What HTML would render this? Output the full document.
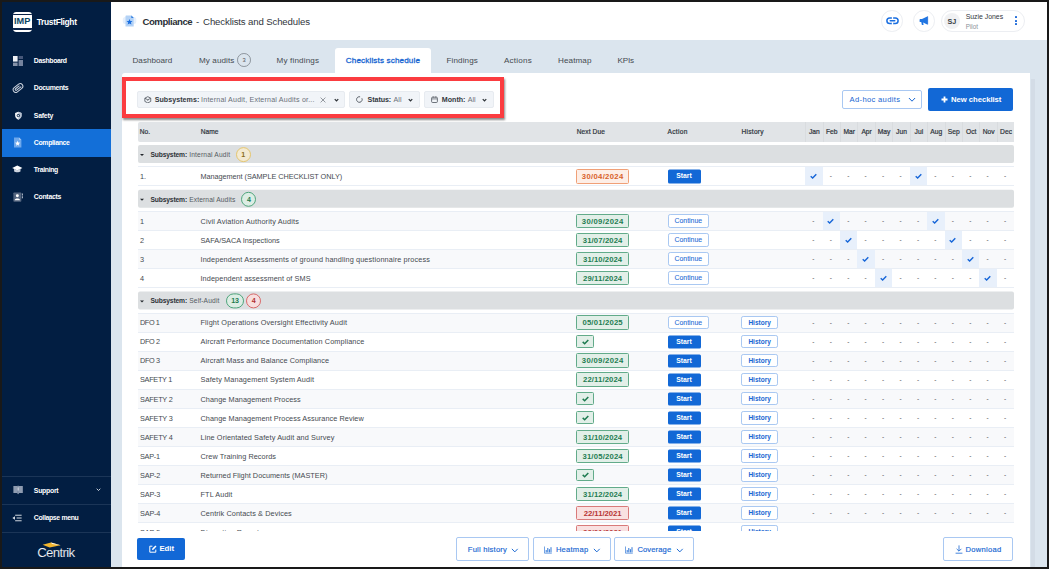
<!DOCTYPE html>
<html lang="en">
<head>
<meta charset="utf-8">
<title>Compliance - Checklists and Schedules</title>
<style>
*{box-sizing:border-box;margin:0;padding:0}
html,body{width:1049px;height:569px;overflow:hidden}
body{position:relative;background:#dbe5ee;font-family:"Liberation Sans",Arial,sans-serif;color:#3a3f45;font-size:7.4px;line-height:1}
.abs{position:absolute}
#frame{position:absolute;left:0;top:0;width:1049px;height:569px;border:2px solid #191919;border-right-width:2px;z-index:50;pointer-events:none}
/* sidebar */
#side{position:absolute;left:2px;top:2px;width:108.5px;height:565px;background:#021e42;color:#fff}
#side .logo{position:absolute;left:10.5px;top:9.7px;width:19.5px;height:20.3px;background:#fff;border-radius:3.4px;overflow:hidden}
#side .logo span{position:absolute;left:0;right:0;top:5.4px;text-align:center;font-weight:bold;font-size:9.2px;color:#0c4562;letter-spacing:0.1px}
#side .logo i{position:absolute;left:0;right:0;top:16.4px;height:1.6px;background:#0b2348}
#side .logo u{position:absolute;left:0;right:0;top:1.9px;height:1.1px;background:#0b2348}
#side .brand{position:absolute;left:34.7px;top:16.2px;font-weight:bold;font-size:8.4px;white-space:nowrap}
.nav{position:absolute;left:0;width:108.5px;height:27.3px;font-size:6.9px;font-weight:bold;letter-spacing:-0.15px}
.nav.act{background:#136fd8;height:27.6px}
.nav span{position:absolute;left:31.8px;top:10.7px;white-space:nowrap}
.nav i{font-style:normal}
.nav svg{position:absolute;left:10.5px;top:8px}
.sdiv{position:absolute;left:0;width:108.5px;height:1px;background:#1b3557}
/* topbar */
#top{position:absolute;left:110.5px;top:2px;width:936.5px;height:38px;background:#fff}
#title{position:absolute;left:32px;top:14.6px;font-size:9.6px;color:#30353b;white-space:nowrap;letter-spacing:0.05px}
#title b{font-weight:bold;color:#2b3036}
.circ{position:absolute;width:21.6px;height:21.6px;border-radius:50%;border:1px solid #eceef2;background:#fff}
#user{position:absolute;left:830.6px;top:8.2px;width:84px;height:21.6px;border-radius:11px;border:1px solid #eceef2;background:#fff}
#user .av{position:absolute;left:1.6px;top:1.6px;width:16.6px;height:16.6px;border-radius:50%;background:#f0f1f3;font-size:7.2px;font-weight:bold;color:#3a3f45;text-align:center;line-height:17px;letter-spacing:0.2px}
#user .n1{position:absolute;left:23.6px;top:3.2px;font-size:6.9px;color:#33383e;white-space:nowrap}
#user .n2{position:absolute;left:23.6px;top:12.7px;font-size:6.3px;color:#8a9098}
#user .kb{position:absolute;left:72.8px;top:4.8px;width:2.2px}
#user .kb i{display:block;width:2.1px;height:2.1px;background:#1565d8;margin-bottom:1.55px;border-radius:0.4px}
/* tabs */
.tab{position:absolute;top:56.8px;font-size:8.1px;color:#454a50;white-space:nowrap}
#tabact{position:absolute;left:335px;top:48px;width:96px;height:27px;background:#fff;border-radius:3px 3px 0 0}
#tabact>span{position:absolute;left:10.8px;top:8.8px;font-size:8.1px;color:#1766d2;white-space:nowrap;-webkit-text-stroke:0.3px #1766d2}
.tbadge{position:absolute;left:237.2px;top:53.4px;width:13.8px;height:13.8px;border-radius:50%;border:1px solid #8c949c;font-size:5.8px;text-align:center;line-height:12.2px;color:#555}
/* panel */
#panel{position:absolute;left:122px;top:73px;width:908px;height:494px;background:#fff;border-radius:3px 0 0 0}
#sbar{position:absolute;left:1031.2px;top:79px;width:3.8px;height:489px;background:#d3dce6}
#red{position:absolute;left:122.2px;top:77px;width:381.8px;height:40.8px;border:4.5px solid #fb3c40;box-shadow:0.5px 1.5px 2px rgba(0,0,0,.45);z-index:5}
.filt{position:absolute;top:91px;height:16.8px;background:#f1f4f8;border:1px solid #e7ebf0;border-radius:2px;font-size:7.1px;color:#6a7078;white-space:nowrap}
.filt b{color:#33383e}
.filt .t{position:absolute;top:4.9px}
/* header buttons */
#adhoc{position:absolute;left:842px;top:90px;width:79.5px;height:18.5px;border:1px solid #a9c8f2;border-radius:2px;background:#fff;color:#1766d2;font-size:7.6px}
#adhoc>span{position:absolute;left:6.6px;top:5.3px;white-space:nowrap}
#newc{position:absolute;left:928.2px;top:88px;width:84.4px;height:22.6px;border-radius:2px;background:#1268d6;color:#fff;font-size:7.7px;font-weight:bold}
#newc>span{position:absolute;left:22.9px;top:7.7px;white-space:nowrap}
/* table */
#clip{position:absolute;left:0;top:0;width:1049px;height:531.3px;overflow:hidden}
#thead{position:absolute;left:137.5px;top:121.8px;width:876.3px;height:19.8px;overflow:hidden;border-radius:2px 0 0 2px;background:#e1e4e7;font-size:6.6px;color:#3a3f45}
#thead span{position:absolute;top:7.5px;white-space:nowrap;color:#2d333a;-webkit-text-stroke:0.2px #2d333a}
#thead i{font-style:normal}
#thead .m{position:absolute;top:0;height:19.8px;border-left:1px solid #d9dcdf;text-align:center;line-height:20.2px;font-size:6.7px;color:#2d333a;-webkit-text-stroke:0.2px #2d333a}
.grp{position:absolute;left:137.5px;width:876.3px;height:18px;background:#dcdfe1;border-radius:2px;font-size:6.7px;color:#555b62}
.grp .car{position:absolute;left:2.5px;top:8.9px;width:0;height:0;border-left:2px solid transparent;border-right:2px solid transparent;border-top:2.4px solid #23272c}
.grp .gl{position:absolute;left:13px;top:6.7px;white-space:nowrap}
.grp .gl b{color:#2d3237}
.grp .gl i{font-style:normal}
.ln{position:absolute;left:137.5px;width:876.3px;height:1px;background:#e9eef5}
.cb{position:absolute;top:1.9px;height:15px;min-width:15px;border-radius:7.5px;font-size:7.1px;font-weight:bold;text-align:center;line-height:14.8px;border:1px solid}
.cb.y{border-color:#e5c66e;background:#f3ead2;color:#8a6a1c}
.cb.g{border-color:#4fa57c;background:#dcede4;color:#1d7a4f}
.cb.g.w{width:18.6px}
.cb.r{border-color:#d86a6a;background:#f7dede;color:#b03030}
.row{position:absolute;left:137.5px;width:876.3px;height:19px;overflow:hidden;border-top:1px solid #e9eef5;background:#fff;font-size:7.3px;color:#454a50}
.row.odd{background:#f8f9fb}
.row.first{height:19.7px;border-bottom:1px solid #e9eef5}
.row.first>*{margin-top:0.1px}
.row .no{position:absolute;left:2.5px;top:5.6px;white-space:nowrap}
.row .nm{position:absolute;left:63px;top:5.6px;white-space:nowrap}
.due{position:absolute;left:438.6px;top:1.6px;width:52.8px;height:14.6px;border:1px solid;border-radius:1.5px;font-size:7.7px;font-weight:bold;text-align:center;line-height:14px;white-space:nowrap;padding-left:0.3px}
.due i{font-style:normal}
.due.g{border-color:#62ab8a;background:#e2efe8;color:#1f7d52}
.due.o{border-color:#f0a077;background:#fdeee6;color:#d8622a}
.due.r{border-color:#d97a7a;background:#f9e1e1;color:#b73535}
.due.chk{width:17.6px;height:12.8px;top:2.4px}
.due.chk svg{position:absolute;left:4.6px;top:2.8px}
.btn{position:absolute;left:530px;top:2.4px;height:13.2px;border-radius:1.5px;font-size:6.8px;text-align:center;line-height:14.2px}
.btn.start{top:2px;transform:translateY(0.45px);width:33px;background:#1268d6;color:#fff;font-weight:bold}
.btn.cont{width:41.6px;border:1px solid #a9c8f2;background:#fff;color:#1f6cd6;top:2px;line-height:12.3px;height:13.5px;font-size:6.9px;border-radius:2.2px;-webkit-text-stroke:0.08px #1f6cd6}
.btn.hist{left:603.6px;width:37px;border:1px solid #a9c8f2;background:#fff;color:#1766d2;top:2px;line-height:12.1px;height:13.5px;font-weight:bold;font-size:6.5px;border-radius:2.2px}
.mc{position:absolute;top:-1px;height:19px;text-align:center;line-height:19px;font-size:6.5px;color:#555;padding-right:0.8px}
.mc.on{background:#e8f0fb}
.mc svg{position:absolute;left:4.9px;top:6.6px}
/* bottom */
#bbar{position:absolute;left:122px;top:531.3px;width:908px;height:38px;background:#fff}
.bb{position:absolute;top:537.2px;height:23.6px;border:1px solid #a9c8f2;border-radius:2px;background:#fff;color:#1766d2;font-size:7.6px}
.bb span{position:absolute;top:7.7px;white-space:nowrap}
.bb i{font-style:normal;-webkit-text-stroke:0.15px #1766d2}
#edit{position:absolute;left:137px;top:537.9px;width:47.6px;height:22.6px;border-radius:2px;background:#1268d6;color:#fff;font-size:7.8px;font-weight:bold}
#edit span{position:absolute;left:22.4px;top:7.2px}
</style>
</head>
<body>
<div id="side">
  <div class="logo"><u></u><span>IMP</span><i></i></div>
  <div class="brand"><span style="letter-spacing:-0.297px">TrustFlight</span></div>
  <div class="nav" style="top:45.5px"><svg style="left:10.8px;top:8.4px" width="10" height="10" viewBox="0 0 10 10"><rect x="0" y="0" width="4.6" height="5.6" fill="#eef1f6"/><rect x="5.6" y="0" width="4.4" height="3" fill="#47587a"/><rect x="0" y="6.6" width="4.6" height="3.4" fill="#8491a8"/><rect x="5.6" y="4" width="4.4" height="6" fill="#75839e"/></svg><span><i style="letter-spacing:-0.345px">Dashboard</i></span></div>
  <div class="nav" style="top:72.8px"><svg style="left:10px;top:7.6px" width="12" height="12" viewBox="0 0 12 12"><g transform="rotate(-38 6 6)" fill="none" stroke="#ccd3de" stroke-width="1"><rect x="0.6" y="3.4" width="10.8" height="5.2" rx="2.6"/><path d="M9.4 6.9 H3.6 a0.9 0.9 0 0 1 0 -1.8 H8.6"/></g></svg><span><i style="letter-spacing:-0.347px">Documents</i></span></div>
  <div class="nav" style="top:100px"><svg style="left:11.6px;top:8.6px" width="8.6" height="9.4" viewBox="0 0 11 11"><path d="M5.5 0.6 L9.6 2.2 V5.4 C9.6 8 7.6 9.8 5.5 10.6 C3.4 9.8 1.4 8 1.4 5.4 V2.2 Z" fill="#f2f4f8"/><path d="M5.5 0.6 L9.6 2.2 V5.4 C9.6 8 7.6 9.8 5.5 10.6 Z" fill="#b4bfd0"/><circle cx="5.5" cy="5.3" r="2" fill="#021e42"/><circle cx="5.5" cy="5.3" r="1.1" fill="#dfe4ec"/></svg><span><i style="letter-spacing:-0.233px">Safety</i></span></div>
  <div class="nav act" style="top:127.2px"><svg style="left:9.7px;top:8.3px" width="11" height="11" viewBox="0 0 11 11"><path d="M2 0.4 H7 L9.4 2.8 V10.6 H2 Z" fill="#6ea8ec"/><path d="M7 0.4 L9.4 2.8 H7 Z" fill="#a9cbf5"/><path d="M5.6 3.8 L6.3 5.6 L8.2 5.7 L6.7 6.9 L7.2 8.8 L5.6 7.7 L4 8.8 L4.5 6.9 L3 5.7 L4.9 5.6 Z" fill="#fff"/></svg><span><i style="letter-spacing:-0.326px">Compliance</i></span></div>
  <div class="nav" style="top:154.5px"><svg style="left:10.2px;top:7.3px" width="10.6" height="10.6" viewBox="0 0 11 11"><path d="M5.5 1.6 L10.8 4.2 L5.5 6.8 L0.2 4.2 Z" fill="#fff"/><path d="M2.2 5 V7.8 C3.4 8.9 7.6 8.9 8.8 7.8 V5 L5.5 6.6 Z" fill="#cfd6e1"/></svg><span><i style="letter-spacing:-0.326px">Training</i></span></div>
  <div class="nav" style="top:181.8px"><svg style="left:10.5px;top:8.2px" width="10.2" height="10.2" viewBox="0 0 11 11"><rect x="0.4" y="0.6" width="8.6" height="9.8" rx="0.8" fill="#54657f"/><circle cx="4.7" cy="4" r="1.6" fill="#fff"/><path d="M1.8 8.8 C1.8 6.4 7.6 6.4 7.6 8.8 Z" fill="#fff"/><rect x="9.6" y="1.6" width="1" height="2.2" fill="#c8d0dc"/><rect x="9.6" y="4.6" width="1" height="2.2" fill="#c8d0dc"/></svg><span><i style="letter-spacing:-0.273px">Contacts</i></span></div>
  <div class="sdiv" style="top:474px"></div>
  <div class="nav" style="top:475.3px"><svg style="left:10.8px;top:7.9px" width="10.2" height="10.2" viewBox="0 0 11 11"><path d="M0.4 1 H5 V8.6 H0.4 Z M6 1 H10.6 V8.6 H6 Z" fill="#8e9bb0"/><rect x="4.9" y="0.8" width="1.2" height="9" fill="#aab4c6"/><rect x="5.1" y="2.6" width="0.8" height="3.4" fill="#fff"/></svg><span><i style="letter-spacing:-0.258px">Support</i></span><svg style="left:93.6px;top:10.6px" width="5" height="3.4" viewBox="0 0 6 4"><path d="M0.8 0.8 L3 3 L5.2 0.8" fill="none" stroke="#dfe4ec" stroke-width="1.1"/></svg></div>
  <div class="sdiv" style="top:502px"></div>
  <div class="nav" style="top:502.6px"><svg style="left:9.9px;top:8.2px" width="10.2" height="10.2" viewBox="0 0 11 11"><path d="M3.4 2.4 H10.4 M5 5.4 H10.4 M3.4 8.4 H10.4" stroke="#e4e8ee" stroke-width="1"/><path d="M0.4 5.4 L3.2 3.4 V7.4 Z" fill="#e4e8ee"/></svg><span><i style="letter-spacing:-0.332px">Collapse menu</i></span></div>
  <div class="sdiv" style="top:529.5px"></div>
  <svg class="abs" style="left:34px;top:537px" width="44" height="22" viewBox="0 0 44 22"><path d="M6.6 5.8 L15 3.6 L24.6 6.2 L13.6 8.4 Z" fill="#f3b62e"/><path d="M15 3.6 L24.6 6.2 L16 4.9 Z" fill="#fff" opacity="0.9"/><text x="1.2" y="17.6" font-family="Liberation Sans, Arial, sans-serif" font-size="13.2" fill="#f4f6f9" stroke="#021e42" stroke-width="0.12" textLength="37.9" lengthAdjust="spacing">Centrik</text></svg>
</div>

<div id="top">
  <svg class="abs" style="left:11.3px;top:13px" width="15" height="12" viewBox="0 0 15 12"><rect x="0.8" y="2" width="13.5" height="7" rx="2.5" fill="#e6f0fc"/><path d="M4 0.5 H9.6 L11.7 2.6 V11.5 H3.5 V1 Z" fill="#b3d2f6"/><path d="M9.3 0.6 L11.7 3 H9.3 Z" fill="#2f7de0"/><path d="M7.5 4 L8.4 6 L10.5 6.1 L8.9 7.5 L9.5 9.6 L7.5 8.4 L5.6 9.6 L6.2 7.5 L4.6 6.1 L6.7 6 Z" fill="#1b6fe0"/></svg>
  <div id="title"><b class="abs" style="left:0" ><span style="letter-spacing:-0.469px">Compliance</span></b><span class="abs" style="left:53.6px">-</span><span class="abs" style="left:60.6px"><span style="letter-spacing:-0.128px">Checklists and Schedules</span></span></div>
  <div class="circ" style="left:770.5px;top:8.2px"><svg class="abs" style="left:3.9px;top:6.3px" width="13" height="8" viewBox="0 0 13 8"><rect x="0.9" y="1" width="11.2" height="5.6" rx="2.8" fill="none" stroke="#1b6fe0" stroke-width="1.5"/><rect x="5.5" y="0" width="2" height="8" fill="#fff"/><path d="M4.2 3.8 H8.8" stroke="#1b6fe0" stroke-width="1.4" stroke-linecap="round"/><path d="M5 1 H5.6 M7.4 1 H8 M5 6.6 H5.6 M7.4 6.6 H8" stroke="#1b6fe0" stroke-width="1.5"/></svg></div>
  <div class="circ" style="left:802.7px;top:8.2px"><svg class="abs" style="left:5.2px;top:5.2px" width="10" height="10" viewBox="0 0 10 10"><path d="M0.6 3.6 C0.6 3.2 0.9 3 1.3 3 H3 L8.2 0.4 V8.4 L3 6 H1.3 C0.9 6 0.6 5.8 0.6 5.4 Z" fill="#2076e2"/><path d="M2.2 5.8 H4 L4.6 9 H2.9 Z" fill="#2076e2"/><rect x="8.2" y="0.2" width="0.9" height="8.4" rx="0.4" fill="#1565d8"/></svg></div>
  <div id="user"><div class="av">SJ</div><div class="n1"><span style="letter-spacing:-0.013px">Suzie Jones</span></div><div class="n2">Pilot</div><div class="kb"><i></i><i></i><i></i></div></div>
</div>

<div class="tab" style="left:132.5px"><span style="letter-spacing:0.021px">Dashboard</span></div>
<div class="tab" style="left:199px"><span style="letter-spacing:0.084px">My audits</span></div><div class="tbadge">3</div>
<div class="tab" style="left:276.5px"><span style="letter-spacing:0.160px">My findings</span></div>
<div id="tabact"><span><span style="letter-spacing:0.146px">Checklists schedule</span></span></div>
<div class="tab" style="left:446.5px"><span style="letter-spacing:0.101px">Findings</span></div>
<div class="tab" style="left:504px"><span style="letter-spacing:0.208px">Actions</span></div>
<div class="tab" style="left:558px"><span style="letter-spacing:0.094px">Heatmap</span></div>
<div class="tab" style="left:617.5px"><span style="letter-spacing:-0.173px">KPIs</span></div>

<div id="panel"></div>
<div id="sbar"></div>

<div id="clip">
<div id="thead"><span style="left:2.3px"><i style="letter-spacing:0.045px">No.</i></span><span style="left:63.3px"><i style="letter-spacing:0.027px">Name</i></span><span style="left:439.2px"><i style="letter-spacing:0.100px">Next Due</i></span><span style="left:530px"><i style="letter-spacing:0.295px">Action</i></span><span style="left:604px"><i style="letter-spacing:0.255px">History</i></span>
<div class="m" style="left:667.60px;width:17.43px">Jan</div><div class="m" style="left:685.03px;width:17.43px">Feb</div><div class="m" style="left:702.46px;width:17.43px">Mar</div><div class="m" style="left:719.89px;width:17.43px">Apr</div><div class="m" style="left:737.32px;width:17.43px">May</div><div class="m" style="left:754.75px;width:17.43px">Jun</div><div class="m" style="left:772.18px;width:17.43px">Jul</div><div class="m" style="left:789.61px;width:17.43px">Aug</div><div class="m" style="left:807.04px;width:17.43px">Sep</div><div class="m" style="left:824.47px;width:17.43px">Oct</div><div class="m" style="left:841.90px;width:17.43px">Nov</div><div class="m" style="left:859.33px;width:17.43px">Dec</div>
</div>
<div class="grp" style="top:145px;transform:translateY(0.10px)"><span class="car"></span><span class="gl"><b style="letter-spacing:-0.142px">Subsystem:</b></span><span class="gl" style="left:51.7px"><i style="letter-spacing:0.154px">Internal Audit</i></span><span class="cb y" style="left:98.2px">1</span></div>
<div class="row first" style="top:166.3px"><span class="no">1.</span><span class="nm" style="letter-spacing:-0.050px">Management (SAMPLE CHECKLIST ONLY)</span><div class="due o"><i style="letter-spacing:0.322px">30/04/2024</i></div><div class="btn start">Start</div><div class="mc on" style="left:667.60px;width:17.43px"><svg viewBox="0 0 10 8" width="7" height="6"><path d="M1 4.2 L3.8 6.8 L9 1.4" fill="none" stroke="#1565d8" stroke-width="2"/></svg></div><div class="mc" style="left:685.03px;width:17.43px">-</div><div class="mc" style="left:702.46px;width:17.43px">-</div><div class="mc" style="left:719.89px;width:17.43px">-</div><div class="mc" style="left:737.32px;width:17.43px">-</div><div class="mc" style="left:754.75px;width:17.43px">-</div><div class="mc on" style="left:772.18px;width:17.43px"><svg viewBox="0 0 10 8" width="7" height="6"><path d="M1 4.2 L3.8 6.8 L9 1.4" fill="none" stroke="#1565d8" stroke-width="2"/></svg></div><div class="mc" style="left:789.61px;width:17.43px">-</div><div class="mc" style="left:807.04px;width:17.43px">-</div><div class="mc" style="left:824.47px;width:17.43px">-</div><div class="mc" style="left:841.90px;width:17.43px">-</div><div class="mc" style="left:859.33px;width:17.43px">-</div></div>
<div class="grp" style="top:189px;transform:translateY(0.80px)"><span class="car"></span><span class="gl"><b style="letter-spacing:-0.142px">Subsystem:</b></span><span class="gl" style="left:51.7px"><i style="letter-spacing:0.106px">External Audits</i></span><span class="cb g" style="left:103.9px">4</span></div>
<div class="row odd" style="top:211.3px"><span class="no">1</span><span class="nm" style="letter-spacing:0.159px">Civil Aviation Authority Audits</span><div class="due g"><i style="letter-spacing:0.322px">30/09/2024</i></div><div class="btn cont">Continue</div><div class="mc" style="left:667.60px;width:17.43px">-</div><div class="mc on" style="left:685.03px;width:17.43px"><svg viewBox="0 0 10 8" width="7" height="6"><path d="M1 4.2 L3.8 6.8 L9 1.4" fill="none" stroke="#1565d8" stroke-width="2"/></svg></div><div class="mc" style="left:702.46px;width:17.43px">-</div><div class="mc" style="left:719.89px;width:17.43px">-</div><div class="mc" style="left:737.32px;width:17.43px">-</div><div class="mc" style="left:754.75px;width:17.43px">-</div><div class="mc" style="left:772.18px;width:17.43px">-</div><div class="mc on" style="left:789.61px;width:17.43px"><svg viewBox="0 0 10 8" width="7" height="6"><path d="M1 4.2 L3.8 6.8 L9 1.4" fill="none" stroke="#1565d8" stroke-width="2"/></svg></div><div class="mc" style="left:807.04px;width:17.43px">-</div><div class="mc" style="left:824.47px;width:17.43px">-</div><div class="mc" style="left:841.90px;width:17.43px">-</div><div class="mc" style="left:859.33px;width:17.43px">-</div></div>
<div class="row" style="top:230.3px"><span class="no">2</span><span class="nm" style="letter-spacing:0.005px">SAFA/SACA Inspections</span><div class="due g"><i style="letter-spacing:0.132px">31/07/2024</i></div><div class="btn cont">Continue</div><div class="mc" style="left:667.60px;width:17.43px">-</div><div class="mc" style="left:685.03px;width:17.43px">-</div><div class="mc on" style="left:702.46px;width:17.43px"><svg viewBox="0 0 10 8" width="7" height="6"><path d="M1 4.2 L3.8 6.8 L9 1.4" fill="none" stroke="#1565d8" stroke-width="2"/></svg></div><div class="mc" style="left:719.89px;width:17.43px">-</div><div class="mc" style="left:737.32px;width:17.43px">-</div><div class="mc" style="left:754.75px;width:17.43px">-</div><div class="mc" style="left:772.18px;width:17.43px">-</div><div class="mc" style="left:789.61px;width:17.43px">-</div><div class="mc on" style="left:807.04px;width:17.43px"><svg viewBox="0 0 10 8" width="7" height="6"><path d="M1 4.2 L3.8 6.8 L9 1.4" fill="none" stroke="#1565d8" stroke-width="2"/></svg></div><div class="mc" style="left:824.47px;width:17.43px">-</div><div class="mc" style="left:841.90px;width:17.43px">-</div><div class="mc" style="left:859.33px;width:17.43px">-</div></div>
<div class="row odd" style="top:249.3px"><span class="no">3</span><span class="nm" style="letter-spacing:0.125px">Independent Assessments of ground handling questionnaire process</span><div class="due g"><i style="letter-spacing:0.062px">31/10/2024</i></div><div class="btn cont">Continue</div><div class="mc" style="left:667.60px;width:17.43px">-</div><div class="mc" style="left:685.03px;width:17.43px">-</div><div class="mc" style="left:702.46px;width:17.43px">-</div><div class="mc on" style="left:719.89px;width:17.43px"><svg viewBox="0 0 10 8" width="7" height="6"><path d="M1 4.2 L3.8 6.8 L9 1.4" fill="none" stroke="#1565d8" stroke-width="2"/></svg></div><div class="mc" style="left:737.32px;width:17.43px">-</div><div class="mc" style="left:754.75px;width:17.43px">-</div><div class="mc" style="left:772.18px;width:17.43px">-</div><div class="mc" style="left:789.61px;width:17.43px">-</div><div class="mc" style="left:807.04px;width:17.43px">-</div><div class="mc on" style="left:824.47px;width:17.43px"><svg viewBox="0 0 10 8" width="7" height="6"><path d="M1 4.2 L3.8 6.8 L9 1.4" fill="none" stroke="#1565d8" stroke-width="2"/></svg></div><div class="mc" style="left:841.90px;width:17.43px">-</div><div class="mc" style="left:859.33px;width:17.43px">-</div></div>
<div class="row" style="top:268.3px"><span class="no">4</span><span class="nm" style="letter-spacing:0.093px">Independent assessment of SMS</span><div class="due g"><i style="letter-spacing:0.104px">29/11/2024</i></div><div class="btn cont">Continue</div><div class="mc" style="left:667.60px;width:17.43px">-</div><div class="mc" style="left:685.03px;width:17.43px">-</div><div class="mc" style="left:702.46px;width:17.43px">-</div><div class="mc" style="left:719.89px;width:17.43px">-</div><div class="mc on" style="left:737.32px;width:17.43px"><svg viewBox="0 0 10 8" width="7" height="6"><path d="M1 4.2 L3.8 6.8 L9 1.4" fill="none" stroke="#1565d8" stroke-width="2"/></svg></div><div class="mc" style="left:754.75px;width:17.43px">-</div><div class="mc" style="left:772.18px;width:17.43px">-</div><div class="mc" style="left:789.61px;width:17.43px">-</div><div class="mc" style="left:807.04px;width:17.43px">-</div><div class="mc" style="left:824.47px;width:17.43px">-</div><div class="mc on" style="left:841.90px;width:17.43px"><svg viewBox="0 0 10 8" width="7" height="6"><path d="M1 4.2 L3.8 6.8 L9 1.4" fill="none" stroke="#1565d8" stroke-width="2"/></svg></div><div class="mc" style="left:859.33px;width:17.43px">-</div></div>
<div class="ln" style="top:287.3px"></div>
<div class="grp" style="top:291px;transform:translateY(0.40px)"><span class="car"></span><span class="gl"><b style="letter-spacing:-0.142px">Subsystem:</b></span><span class="gl" style="left:51.7px"><i style="letter-spacing:0.130px">Self-Audit</i></span><span class="cb g w" style="left:88.3px">13</span><span class="cb r" style="left:108.7px">4</span></div>
<div class="row odd" style="top:312.7px"><span class="no" style="letter-spacing:-0.420px">DFO 1</span><span class="nm" style="letter-spacing:0.142px">Flight Operations Oversight Effectivity Audit</span><div class="due g"><i style="letter-spacing:0.192px">05/01/2025</i></div><div class="btn cont">Continue</div><div class="btn hist">History</div><div class="mc" style="left:667.60px;width:17.43px">-</div><div class="mc" style="left:685.03px;width:17.43px">-</div><div class="mc" style="left:702.46px;width:17.43px">-</div><div class="mc" style="left:719.89px;width:17.43px">-</div><div class="mc" style="left:737.32px;width:17.43px">-</div><div class="mc" style="left:754.75px;width:17.43px">-</div><div class="mc" style="left:772.18px;width:17.43px">-</div><div class="mc" style="left:789.61px;width:17.43px">-</div><div class="mc" style="left:807.04px;width:17.43px">-</div><div class="mc" style="left:824.47px;width:17.43px">-</div><div class="mc" style="left:841.90px;width:17.43px">-</div><div class="mc" style="left:859.33px;width:17.43px">-</div></div>
<div class="row" style="top:331.76px"><span class="no" style="letter-spacing:-0.340px">DFO 2</span><span class="nm" style="letter-spacing:0.120px">Aircraft Performance Documentation Compliance</span><div class="due g chk"><svg viewBox="0 0 10 8" width="7" height="5.6"><path d="M1 4.2 L3.8 6.8 L9 1.4" fill="none" stroke="#1d7a4f" stroke-width="2.2"/></svg></div><div class="btn start">Start</div><div class="btn hist">History</div><div class="mc" style="left:667.60px;width:17.43px">-</div><div class="mc" style="left:685.03px;width:17.43px">-</div><div class="mc" style="left:702.46px;width:17.43px">-</div><div class="mc" style="left:719.89px;width:17.43px">-</div><div class="mc" style="left:737.32px;width:17.43px">-</div><div class="mc" style="left:754.75px;width:17.43px">-</div><div class="mc" style="left:772.18px;width:17.43px">-</div><div class="mc" style="left:789.61px;width:17.43px">-</div><div class="mc" style="left:807.04px;width:17.43px">-</div><div class="mc" style="left:824.47px;width:17.43px">-</div><div class="mc" style="left:841.90px;width:17.43px">-</div><div class="mc" style="left:859.33px;width:17.43px">-</div></div>
<div class="row odd" style="top:350.82px"><span class="no" style="letter-spacing:-0.340px">DFO 3</span><span class="nm" style="letter-spacing:0.080px">Aircraft Mass and Balance Compliance</span><div class="due g"><i style="letter-spacing:0.322px">30/09/2024</i></div><div class="btn start">Start</div><div class="btn hist">History</div><div class="mc" style="left:667.60px;width:17.43px">-</div><div class="mc" style="left:685.03px;width:17.43px">-</div><div class="mc" style="left:702.46px;width:17.43px">-</div><div class="mc" style="left:719.89px;width:17.43px">-</div><div class="mc" style="left:737.32px;width:17.43px">-</div><div class="mc" style="left:754.75px;width:17.43px">-</div><div class="mc" style="left:772.18px;width:17.43px">-</div><div class="mc" style="left:789.61px;width:17.43px">-</div><div class="mc" style="left:807.04px;width:17.43px">-</div><div class="mc" style="left:824.47px;width:17.43px">-</div><div class="mc" style="left:841.90px;width:17.43px">-</div><div class="mc" style="left:859.33px;width:17.43px">-</div></div>
<div class="row" style="top:369.88px"><span class="no" style="letter-spacing:-0.280px">SAFETY 1</span><span class="nm" style="letter-spacing:0.123px">Safety Management System Audit</span><div class="due g"><i style="letter-spacing:0.104px">22/11/2024</i></div><div class="btn start">Start</div><div class="btn hist">History</div><div class="mc" style="left:667.60px;width:17.43px">-</div><div class="mc" style="left:685.03px;width:17.43px">-</div><div class="mc" style="left:702.46px;width:17.43px">-</div><div class="mc" style="left:719.89px;width:17.43px">-</div><div class="mc" style="left:737.32px;width:17.43px">-</div><div class="mc" style="left:754.75px;width:17.43px">-</div><div class="mc" style="left:772.18px;width:17.43px">-</div><div class="mc" style="left:789.61px;width:17.43px">-</div><div class="mc" style="left:807.04px;width:17.43px">-</div><div class="mc" style="left:824.47px;width:17.43px">-</div><div class="mc" style="left:841.90px;width:17.43px">-</div><div class="mc" style="left:859.33px;width:17.43px">-</div></div>
<div class="row odd" style="top:388.94px"><span class="no" style="letter-spacing:-0.230px">SAFETY 2</span><span class="nm" style="letter-spacing:0.065px">Change Management Process</span><div class="due g chk"><svg viewBox="0 0 10 8" width="7" height="5.6"><path d="M1 4.2 L3.8 6.8 L9 1.4" fill="none" stroke="#1d7a4f" stroke-width="2.2"/></svg></div><div class="btn start">Start</div><div class="btn hist">History</div><div class="mc" style="left:667.60px;width:17.43px">-</div><div class="mc" style="left:685.03px;width:17.43px">-</div><div class="mc" style="left:702.46px;width:17.43px">-</div><div class="mc" style="left:719.89px;width:17.43px">-</div><div class="mc" style="left:737.32px;width:17.43px">-</div><div class="mc" style="left:754.75px;width:17.43px">-</div><div class="mc" style="left:772.18px;width:17.43px">-</div><div class="mc" style="left:789.61px;width:17.43px">-</div><div class="mc" style="left:807.04px;width:17.43px">-</div><div class="mc" style="left:824.47px;width:17.43px">-</div><div class="mc" style="left:841.90px;width:17.43px">-</div><div class="mc" style="left:859.33px;width:17.43px">-</div></div>
<div class="row" style="top:408.0px"><span class="no" style="letter-spacing:-0.230px">SAFETY 3</span><span class="nm" style="letter-spacing:0.064px">Change Management Process Assurance Review</span><div class="due g chk"><svg viewBox="0 0 10 8" width="7" height="5.6"><path d="M1 4.2 L3.8 6.8 L9 1.4" fill="none" stroke="#1d7a4f" stroke-width="2.2"/></svg></div><div class="btn start">Start</div><div class="btn hist">History</div><div class="mc" style="left:667.60px;width:17.43px">-</div><div class="mc" style="left:685.03px;width:17.43px">-</div><div class="mc" style="left:702.46px;width:17.43px">-</div><div class="mc" style="left:719.89px;width:17.43px">-</div><div class="mc" style="left:737.32px;width:17.43px">-</div><div class="mc" style="left:754.75px;width:17.43px">-</div><div class="mc" style="left:772.18px;width:17.43px">-</div><div class="mc" style="left:789.61px;width:17.43px">-</div><div class="mc" style="left:807.04px;width:17.43px">-</div><div class="mc" style="left:824.47px;width:17.43px">-</div><div class="mc" style="left:841.90px;width:17.43px">-</div><div class="mc" style="left:859.33px;width:17.43px">-</div></div>
<div class="row odd" style="top:427.05999999999995px"><span class="no" style="letter-spacing:-0.230px">SAFETY 4</span><span class="nm" style="letter-spacing:0.105px">Line Orientated Safety Audit and Survey</span><div class="due g"><i style="letter-spacing:0.062px">31/10/2024</i></div><div class="btn start">Start</div><div class="btn hist">History</div><div class="mc" style="left:667.60px;width:17.43px">-</div><div class="mc" style="left:685.03px;width:17.43px">-</div><div class="mc" style="left:702.46px;width:17.43px">-</div><div class="mc" style="left:719.89px;width:17.43px">-</div><div class="mc" style="left:737.32px;width:17.43px">-</div><div class="mc" style="left:754.75px;width:17.43px">-</div><div class="mc" style="left:772.18px;width:17.43px">-</div><div class="mc" style="left:789.61px;width:17.43px">-</div><div class="mc" style="left:807.04px;width:17.43px">-</div><div class="mc" style="left:824.47px;width:17.43px">-</div><div class="mc" style="left:841.90px;width:17.43px">-</div><div class="mc" style="left:859.33px;width:17.43px">-</div></div>
<div class="row" style="top:446.12px"><span class="no" style="letter-spacing:-0.259px">SAP-1</span><span class="nm" style="letter-spacing:0.061px">Crew Training Records</span><div class="due g"><i style="letter-spacing:0.192px">31/05/2024</i></div><div class="btn start">Start</div><div class="btn hist">History</div><div class="mc" style="left:667.60px;width:17.43px">-</div><div class="mc" style="left:685.03px;width:17.43px">-</div><div class="mc" style="left:702.46px;width:17.43px">-</div><div class="mc" style="left:719.89px;width:17.43px">-</div><div class="mc" style="left:737.32px;width:17.43px">-</div><div class="mc" style="left:754.75px;width:17.43px">-</div><div class="mc" style="left:772.18px;width:17.43px">-</div><div class="mc" style="left:789.61px;width:17.43px">-</div><div class="mc" style="left:807.04px;width:17.43px">-</div><div class="mc" style="left:824.47px;width:17.43px">-</div><div class="mc" style="left:841.90px;width:17.43px">-</div><div class="mc" style="left:859.33px;width:17.43px">-</div></div>
<div class="row odd" style="top:465.17999999999995px"><span class="no" style="letter-spacing:-0.179px">SAP-2</span><span class="nm" style="letter-spacing:0.026px">Returned Flight Documents (MASTER)</span><div class="due g chk"><svg viewBox="0 0 10 8" width="7" height="5.6"><path d="M1 4.2 L3.8 6.8 L9 1.4" fill="none" stroke="#1d7a4f" stroke-width="2.2"/></svg></div><div class="btn start">Start</div><div class="btn hist">History</div><div class="mc" style="left:667.60px;width:17.43px">-</div><div class="mc" style="left:685.03px;width:17.43px">-</div><div class="mc" style="left:702.46px;width:17.43px">-</div><div class="mc" style="left:719.89px;width:17.43px">-</div><div class="mc" style="left:737.32px;width:17.43px">-</div><div class="mc" style="left:754.75px;width:17.43px">-</div><div class="mc" style="left:772.18px;width:17.43px">-</div><div class="mc" style="left:789.61px;width:17.43px">-</div><div class="mc" style="left:807.04px;width:17.43px">-</div><div class="mc" style="left:824.47px;width:17.43px">-</div><div class="mc" style="left:841.90px;width:17.43px">-</div><div class="mc" style="left:859.33px;width:17.43px">-</div></div>
<div class="row" style="top:484.24px"><span class="no" style="letter-spacing:-0.179px">SAP-3</span><span class="nm" style="letter-spacing:0.115px">FTL Audit</span><div class="due g"><i style="letter-spacing:0.062px">31/12/2024</i></div><div class="btn start">Start</div><div class="btn hist">History</div><div class="mc" style="left:667.60px;width:17.43px">-</div><div class="mc" style="left:685.03px;width:17.43px">-</div><div class="mc" style="left:702.46px;width:17.43px">-</div><div class="mc" style="left:719.89px;width:17.43px">-</div><div class="mc" style="left:737.32px;width:17.43px">-</div><div class="mc" style="left:754.75px;width:17.43px">-</div><div class="mc" style="left:772.18px;width:17.43px">-</div><div class="mc" style="left:789.61px;width:17.43px">-</div><div class="mc" style="left:807.04px;width:17.43px">-</div><div class="mc" style="left:824.47px;width:17.43px">-</div><div class="mc" style="left:841.90px;width:17.43px">-</div><div class="mc" style="left:859.33px;width:17.43px">-</div></div>
<div class="row odd" style="top:503.29999999999995px"><span class="no" style="letter-spacing:-0.179px">SAP-4</span><span class="nm" style="letter-spacing:0.096px">Centrik Contacts &amp; Devices</span><div class="due r"><i style="letter-spacing:-0.026px">22/11/2021</i></div><div class="btn start">Start</div><div class="btn hist">History</div><div class="mc" style="left:667.60px;width:17.43px">-</div><div class="mc" style="left:685.03px;width:17.43px">-</div><div class="mc" style="left:702.46px;width:17.43px">-</div><div class="mc" style="left:719.89px;width:17.43px">-</div><div class="mc" style="left:737.32px;width:17.43px">-</div><div class="mc" style="left:754.75px;width:17.43px">-</div><div class="mc" style="left:772.18px;width:17.43px">-</div><div class="mc" style="left:789.61px;width:17.43px">-</div><div class="mc" style="left:807.04px;width:17.43px">-</div><div class="mc" style="left:824.47px;width:17.43px">-</div><div class="mc" style="left:841.90px;width:17.43px">-</div><div class="mc" style="left:859.33px;width:17.43px">-</div></div>
<div class="row" style="top:522.36px"><span class="no" style="letter-spacing:-0.179px">SAP-5</span><span class="nm" style="letter-spacing:0.115px">Disruption Reports</span><div class="due r"><i style="letter-spacing:0.062px">22/01/2021</i></div><div class="btn start">Start</div><div class="btn hist">History</div><div class="mc" style="left:667.60px;width:17.43px">-</div><div class="mc" style="left:685.03px;width:17.43px">-</div><div class="mc" style="left:702.46px;width:17.43px">-</div><div class="mc" style="left:719.89px;width:17.43px">-</div><div class="mc" style="left:737.32px;width:17.43px">-</div><div class="mc" style="left:754.75px;width:17.43px">-</div><div class="mc" style="left:772.18px;width:17.43px">-</div><div class="mc" style="left:789.61px;width:17.43px">-</div><div class="mc" style="left:807.04px;width:17.43px">-</div><div class="mc" style="left:824.47px;width:17.43px">-</div><div class="mc" style="left:841.90px;width:17.43px">-</div><div class="mc" style="left:859.33px;width:17.43px">-</div></div>
</div>

<div id="red"></div>
<div class="filt" style="left:137.3px;width:207.7px"><svg class="abs" style="left:6.2px;top:3.9px" width="7.6" height="7.6" viewBox="0 0 8 8"><path d="M4 0.7 L7.1 2.3 V5.7 L4 7.3 L0.9 5.7 V2.3 Z" fill="none" stroke="#4d535c" stroke-width="0.85" stroke-linejoin="round"/><path d="M1 2.4 L4 4 L7 2.4 M4 4 V5" fill="none" stroke="#4d535c" stroke-width="0.85"/></svg><span class="t" style="left:16.4px"><b style="letter-spacing:0.040px">Subsystems:</b></span><span class="t" style="left:62.8px"><span style="letter-spacing:0.193px">Internal Audit, External Audits or...</span></span><svg class="abs" style="left:182px;top:5px" width="6" height="6" viewBox="0 0 6 6"><path d="M0.6 0.6 L5.4 5.4 M5.4 0.6 L0.6 5.4" stroke="#6a7078" stroke-width="0.7"/></svg><svg class="abs" style="left:195.6px;top:6.2px" width="5" height="4" viewBox="0 0 6 4"><path d="M0.9 0.9 L3 3 L5.1 0.9" fill="none" stroke="#2d3237" stroke-width="1.5"/></svg></div>
<div class="filt" style="left:349.2px;width:70.6px"><svg class="abs" style="left:6px;top:4.2px" width="7" height="7" viewBox="0 0 7 7"><path d="M5.9 2.3 A2.8 2.8 0 1 1 4.1 0.8" fill="none" stroke="#4d535c" stroke-width="0.9"/></svg><span class="t" style="left:17.4px"><b style="letter-spacing:-0.064px">Status:</b></span><span class="t" style="left:43.4px">All</span><svg class="abs" style="left:57.6px;top:6.2px" width="5" height="4" viewBox="0 0 6 4"><path d="M0.9 0.9 L3 3 L5.1 0.9" fill="none" stroke="#2d3237" stroke-width="1.5"/></svg></div>
<div class="filt" style="left:423.6px;width:70px"><svg class="abs" style="left:6px;top:4.2px" width="7" height="7" viewBox="0 0 7 7"><rect x="0.6" y="1.2" width="5.8" height="5.3" rx="1" fill="none" stroke="#4d535c" stroke-width="0.8"/><path d="M2.2 0.3 V1.6 M4.8 0.3 V1.6 M0.8 2.9 H6.2" stroke="#4d535c" stroke-width="0.7"/></svg><span class="t" style="left:17.2px"><b style="letter-spacing:0.010px">Month:</b></span><span class="t" style="left:43.2px">All</span><svg class="abs" style="left:57px;top:6.2px" width="5" height="4" viewBox="0 0 6 4"><path d="M0.9 0.9 L3 3 L5.1 0.9" fill="none" stroke="#2d3237" stroke-width="1.5"/></svg></div>

<div id="adhoc"><span><span style="letter-spacing:0.328px">Ad-hoc audits</span></span><svg class="abs" style="left:64.6px;top:5.8px" width="8" height="6" viewBox="0 0 8 6"><path d="M0.9 1 L4 4.2 L7.1 1" fill="none" stroke="#1766d2" stroke-width="1"/></svg></div>
<div id="newc"><svg class="abs" style="left:12.6px;top:8.2px" width="7" height="7" viewBox="0 0 7 7"><path d="M3.5 0.5 V6.5 M0.5 3.5 H6.5" stroke="#fff" stroke-width="1.8"/></svg><span><span style="letter-spacing:-0.043px">New checklist</span></span></div>

<div id="bbar"></div>
<div id="edit"><svg class="abs" style="left:12px;top:7.2px" width="8" height="8" viewBox="0 0 8 8"><path d="M3.4 1.2 H0.8 V7.2 H6.8 V4.6" fill="none" stroke="#fff" stroke-width="1"/><path d="M3 5 L3.3 3.6 L6.4 0.5 L7.5 1.6 L4.4 4.7 Z" fill="#fff"/></svg><span>Edit</span></div>
<div class="bb" style="left:456.2px;width:72.6px"><span style="left:10.6px"><i style="letter-spacing:0.215px">Full history</i></span><svg class="abs" style="left:54.2px;top:9.4px" width="7.6" height="5.4" viewBox="0 0 7 5"><path d="M0.8 0.8 L3.5 3.6 L6.2 0.8" fill="none" stroke="#1766d2" stroke-width="0.9"/></svg></div>
<div class="bb" style="left:533.2px;width:77.6px"><svg class="abs" style="left:10px;top:7.4px" width="8" height="8" viewBox="0 0 8 8"><path d="M0.5 0.5 V7.2 H7.8" fill="none" stroke="#1766d2" stroke-width="0.6"/><path d="M2.2 6.4 V4 M3.8 6.4 V2 M5.4 6.4 V3.2 M7 6.4 V1.2" stroke="#1766d2" stroke-width="0.9"/></svg><span style="left:21.7px"><i style="letter-spacing:0.239px">Heatmap</i></span><svg class="abs" style="left:59.3px;top:9.4px" width="7.6" height="5.4" viewBox="0 0 7 5"><path d="M0.8 0.8 L3.5 3.6 L6.2 0.8" fill="none" stroke="#1766d2" stroke-width="0.9"/></svg></div>
<div class="bb" style="left:614.4px;width:79.3px"><svg class="abs" style="left:10px;top:7.4px" width="8" height="8" viewBox="0 0 8 8"><path d="M0.5 0.5 V7.2 H7.8" fill="none" stroke="#1766d2" stroke-width="0.6"/><path d="M2.2 6.4 V4 M3.8 6.4 V2 M5.4 6.4 V3.2 M7 6.4 V1.2" stroke="#1766d2" stroke-width="0.9"/></svg><span style="left:22px"><i style="letter-spacing:0.120px">Coverage</i></span><svg class="abs" style="left:61px;top:9.4px" width="7.6" height="5.4" viewBox="0 0 7 5"><path d="M0.8 0.8 L3.5 3.6 L6.2 0.8" fill="none" stroke="#1766d2" stroke-width="0.9"/></svg></div>
<div class="bb" style="left:943px;width:69.6px"><svg class="abs" style="left:11.4px;top:6.8px" width="8" height="9" viewBox="0 0 8 9"><path d="M4 0.4 V6 M1.6 3.8 L4 6.2 L6.4 3.8" fill="none" stroke="#1766d2" stroke-width="0.8"/><path d="M0.6 8.2 H7.4" stroke="#1766d2" stroke-width="0.8"/></svg><span style="left:21.6px"><i style="letter-spacing:0.277px">Download</i></span></div>

<div id="frame"></div>
</body>
</html>
